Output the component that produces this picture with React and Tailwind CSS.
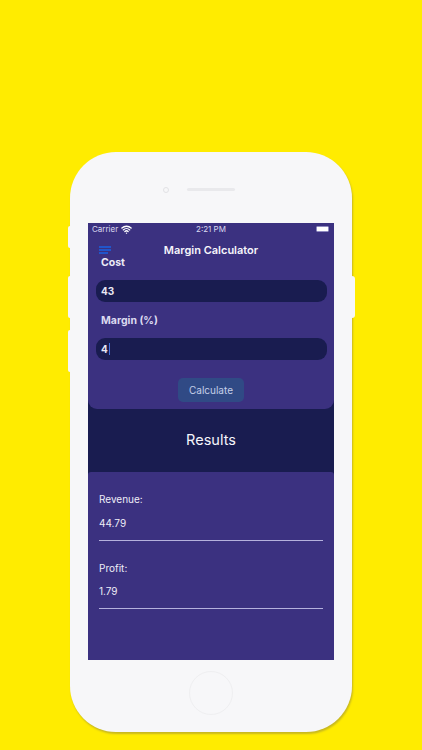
import { Wifi } from 'lucide-react';

const font = "font-['Inter','Liberation_Sans',sans-serif]";

function Field({ value, caret }) {
  return (
    <div className="ml-[8px] mr-[7px] flex h-[22px] items-center rounded-[9px] bg-[#191c50] pl-[5px] text-[10px] font-bold leading-none text-[#e9e8f4]">
      {value}
      {caret && <span className="ml-[1px] inline-block h-[12px] w-[1px] bg-[#3f6fe0]" />}
    </div>
  );
}

function ResultRow({ label, value, height, gap }) {
  return (
    <div className={`mx-[11px] border-b border-[#b5b1dd] text-[10px] leading-none text-[#eeedf7] ${height}`}>
      <div className="pt-[22px]">{label}</div>
      <div className={gap}>{value}</div>
    </div>
  );
}

export default function App() {
  return (
    <div className={`${font} h-[750px] w-[422px] overflow-hidden bg-[#ffec00] pt-[152px]`}>
      <div className="relative mx-auto h-[580px] w-[282px] rounded-[46px] bg-[#f7f7f9] pt-[71px] shadow-[1px_2px_2px_#c8b820]">
        {/* side buttons */}
        <div className="absolute left-[-2px] top-[74px] h-[22px] w-[2px] rounded-l bg-[#f7f7f9]" />
        <div className="absolute left-[-2px] top-[124px] h-[42px] w-[2px] rounded-l bg-[#f7f7f9]" />
        <div className="absolute left-[-2px] top-[178px] h-[42px] w-[2px] rounded-l bg-[#f7f7f9]" />
        <div className="absolute right-[-3px] top-[124px] h-[42px] w-[3px] rounded-r bg-[#f7f7f9]" />

        {/* camera + speaker */}
        <div className="absolute left-[93px] top-[35px] h-[6px] w-[6px] rounded-full border border-[#e2e2e5]" />
        <div className="absolute left-[117px] top-[36px] h-[3px] w-[48px] rounded-full bg-[#e9e9ec]" />

        <div className="mx-auto flex h-[437px] w-[246px] flex-col bg-[#191c50]">
          <div className="relative h-[186px] rounded-b-[9px] bg-[#3b3180]">
            <div className="relative flex h-[12px] items-center justify-between px-[4px] text-[8px] leading-none text-[#dcdaf0]">
              <div className="flex items-center gap-[3px]">
                Carrier
                <Wifi size={11} strokeWidth={3} className="text-white" />
              </div>
              <span className="absolute left-0 right-0 text-center">2:21 PM</span>
              <div className="mr-[1px] h-[6px] w-[13px] rounded-[1.5px] border border-[#8f8ac0] bg-white" />
            </div>

            <div className="relative h-[21px] pt-[10px] text-center text-[11px] font-semibold leading-none text-[#f6f5fb]">
              <svg className="absolute left-[11px] top-[11px]" width="12" height="8" viewBox="0 0 12 8" fill="none" stroke="#1a62e4" strokeWidth="1.7">
                <path d="M0 1h12M0 4h12M0 7h9" />
              </svg>
              Margin Calculator
            </div>

            <div className="pl-[13px] pt-[1px] text-[10.5px] font-bold leading-[11px] text-[#ecebf6]">Cost</div>
            <div className="h-[12px]" />
            <Field value="43" />
            <div className="pb-[11px] pl-[13px] pt-[14px] text-[10.5px] font-bold leading-none text-[#dcdaf0]">Margin (%)</div>
            <Field value="4" caret />
            <div className="mt-[18px] flex justify-center">
              <div className="flex h-[24px] w-[66px] items-center justify-center rounded-[5px] bg-[#304a85] text-[10px] leading-none text-[#c4cfe8]">
                Calculate
              </div>
            </div>
          </div>

          <div className="flex h-[63px] items-center justify-center text-[14.5px] leading-none text-[#f6f5fb]">Results</div>

          <div className="h-[188px] rounded-t-[3px] bg-[#3b3180]">
            <ResultRow label="Revenue:" value="44.79" height="h-[69px]" gap="pt-[14px]" />
            <ResultRow label="Profit:" value="1.79" height="h-[68px]" gap="pt-[13px]" />
          </div>
        </div>

        {/* home button */}
        <div className="mx-auto mt-[11px] h-[44px] w-[44px] rounded-full border border-[#efeff1]" />
      </div>
    </div>
  );
}
